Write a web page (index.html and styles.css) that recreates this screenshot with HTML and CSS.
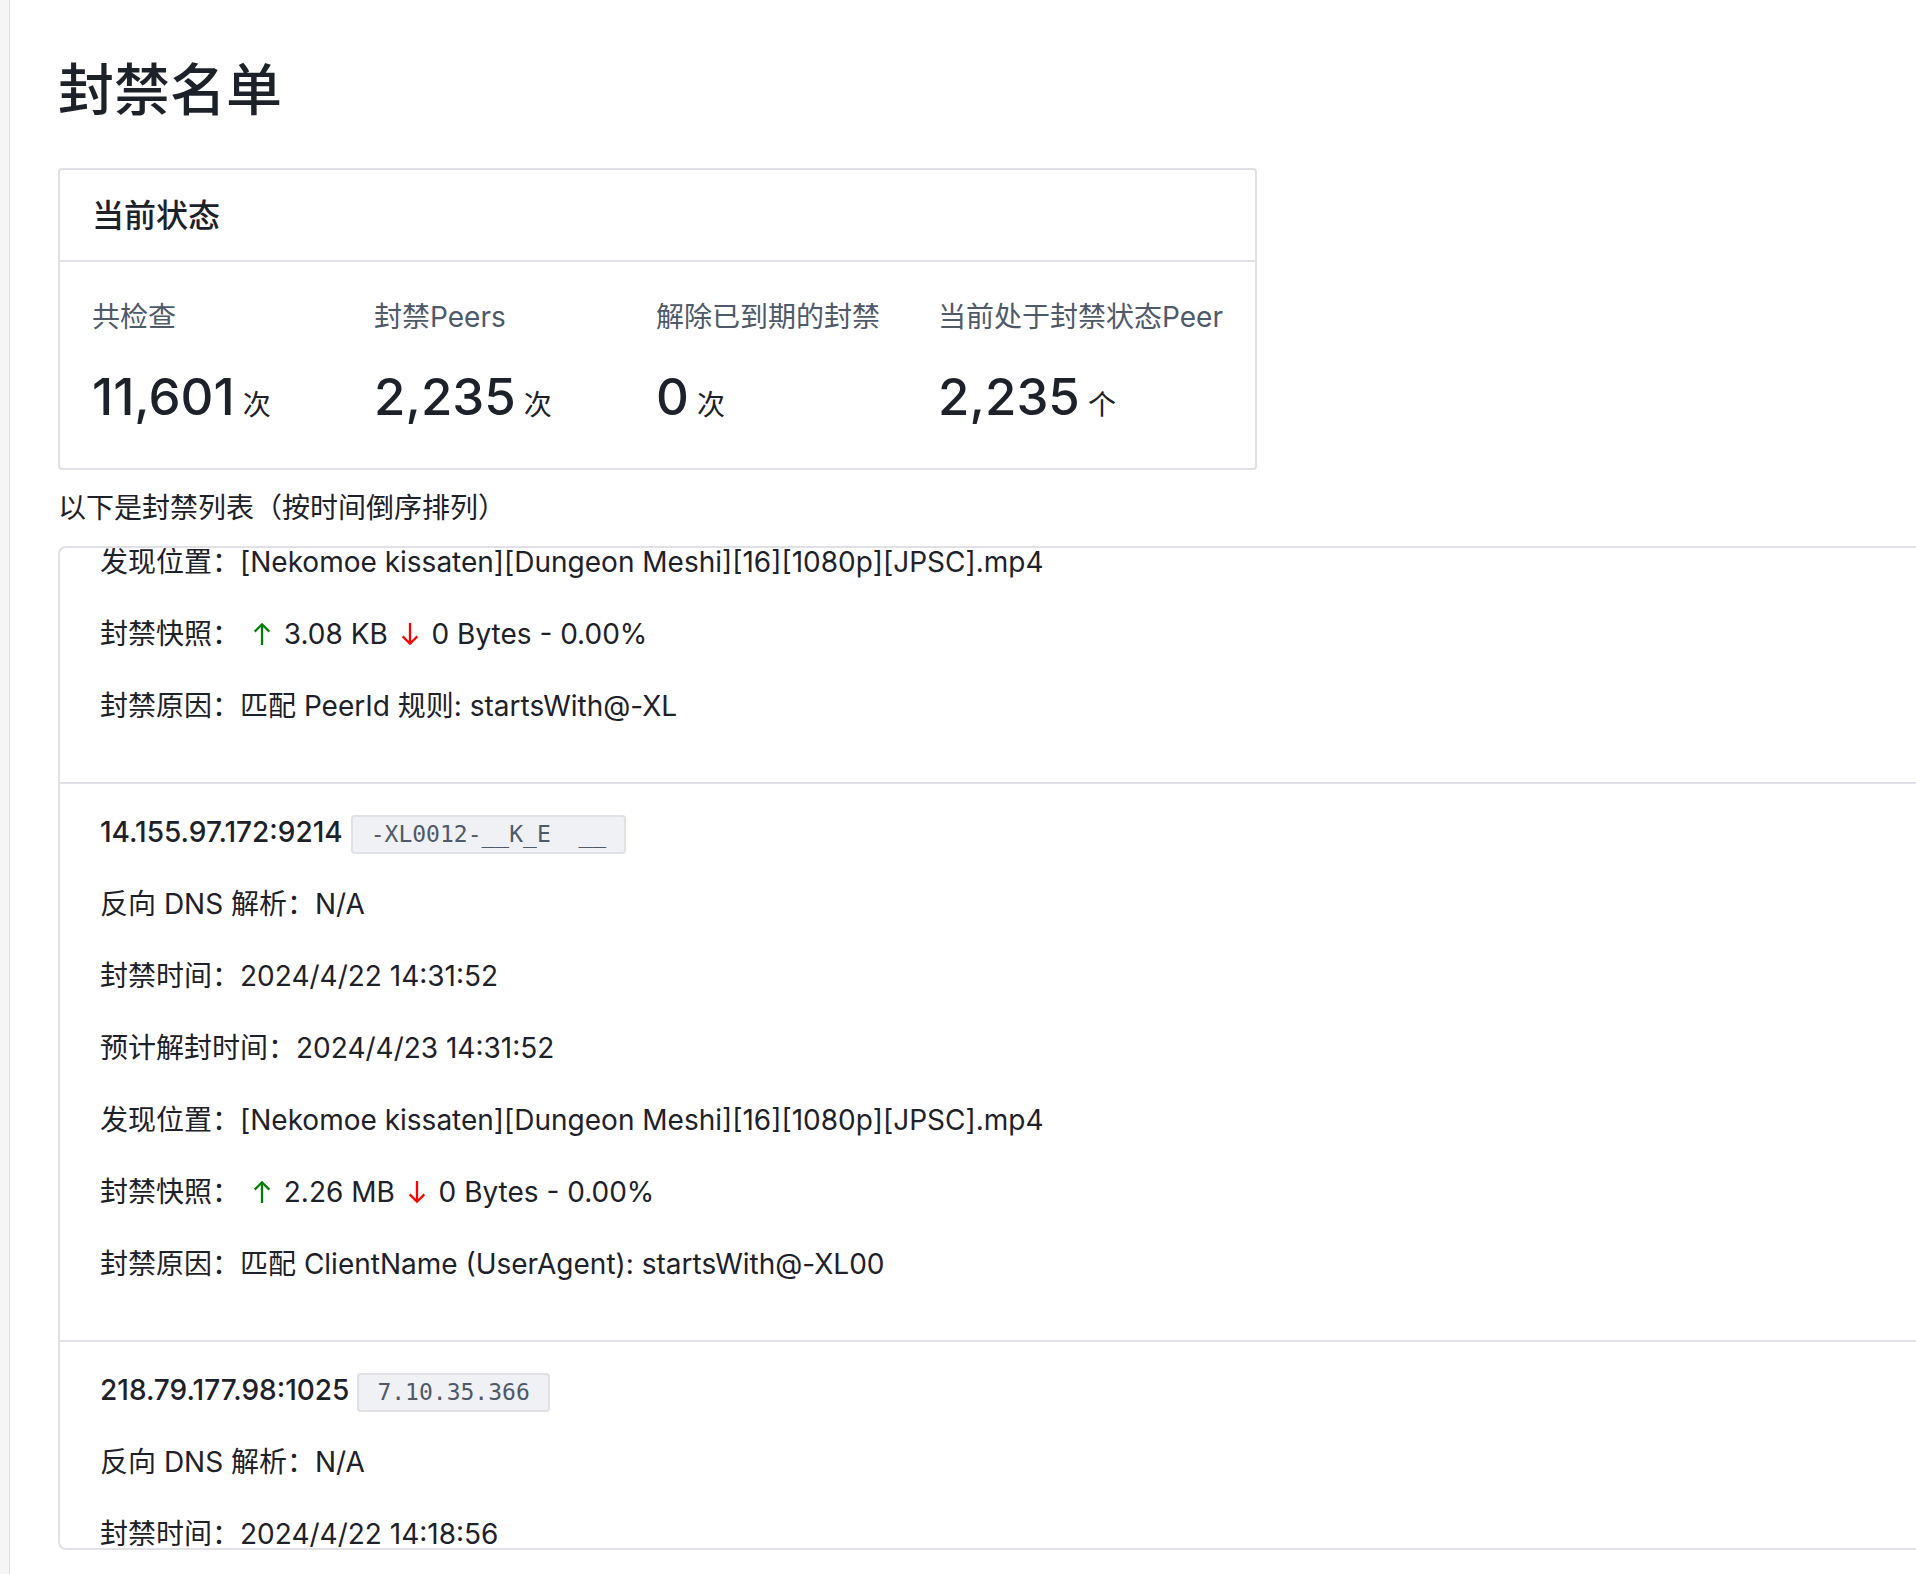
FILE: index.html
```html
<!DOCTYPE html>
<html lang="zh-CN">
<head>
<meta charset="utf-8">
<meta name="viewport" content="width=device-width, initial-scale=1">
<title>封禁名单</title>
<link rel="stylesheet" href="styles.css">
</head>
<body>
<svg class="sprite" aria-hidden="true">
  <symbol id="arrow-up" viewBox="0 0 28 28"><path d="M14 4v21M6.7 11.6 14 4.3l7.3 7.3"/></symbol>
  <symbol id="arrow-down" viewBox="0 0 28 28"><path d="M14 3v21M6.7 16.4l7.3 7.3 7.3-7.3"/></symbol>
</svg>
<div class="layout">
  <aside class="sider"></aside>
  <main class="content">
    <h1 class="title">封禁名单</h1>
    <section class="card">
      <h2 class="card-title">当前状态</h2>
      <dl class="stats">
        <div class="stat"><dt>共检查</dt><dd>11,601<span class="unit">次</span></dd></div>
        <div class="stat"><dt>封禁Peers</dt><dd>2,235<span class="unit">次</span></dd></div>
        <div class="stat"><dt>解除已到期的封禁</dt><dd>0<span class="unit">次</span></dd></div>
        <div class="stat"><dt>当前处于封禁状态Peer</dt><dd>2,235<span class="unit">个</span></dd></div>
      </dl>
    </section>
    <p class="hint">以下是封禁列表（按时间倒序排列）</p>
    <ul class="ban-list">
      <li class="ban ban-scrolled">
        <p>发现位置：[Nekomoe kissaten][Dungeon Meshi][16][1080p][JPSC].mp4</p>
        <p>封禁快照： <svg class="icon up"><use href="#arrow-up"/></svg> 3.08 KB <svg class="icon down"><use href="#arrow-down"/></svg> 0 Bytes - 0.00%</p>
        <p>封禁原因：匹配 PeerId 规则: startsWith@-XL</p>
      </li>
      <li class="ban">
        <h3 class="peer">14.155.97.172:9214<span class="tag">-XL0012-__K_E  __</span></h3>
        <p>反向 DNS 解析：N/A</p>
        <p>封禁时间：2024/4/22 14:31:52</p>
        <p>预计解封时间：2024/4/23 14:31:52</p>
        <p>发现位置：[Nekomoe kissaten][Dungeon Meshi][16][1080p][JPSC].mp4</p>
        <p>封禁快照： <svg class="icon up"><use href="#arrow-up"/></svg> 2.26 MB <svg class="icon down"><use href="#arrow-down"/></svg> 0 Bytes - 0.00%</p>
        <p>封禁原因：匹配 ClientName (UserAgent): startsWith@-XL00</p>
      </li>
      <li class="ban">
        <h3 class="peer">218.79.177.98:1025<span class="tag">7.10.35.366</span></h3>
        <p>反向 DNS 解析：N/A</p>
        <p>封禁时间：2024/4/22 14:18:56</p>
      </li>
    </ul>
  </main>
</div>
</body>
</html>
```

FILE: styles.css
```css
* {
  box-sizing: border-box;
  margin: 0;
  padding: 0;
}

body {
  font-family: Inter, "Noto Sans CJK SC", sans-serif;
  font-size: 28px;
  line-height: 28px;
  color: #1d2129;
  background: #fff;
}

.sprite {
  display: none;
}

.layout {
  display: flex;
  height: 100vh;
  overflow: hidden;
}

.sider {
  flex: none;
  width: 10px;
  background: #f5f5f5;
  border-right: 1px solid #e0e0e6;
}

.content {
  flex: 1;
  min-width: 0;
  display: flex;
  flex-direction: column;
  padding: 56px 0 24px 48px;
}

.title {
  font-size: 56px;
  font-weight: 500;
  line-height: 68px;
  margin-bottom: 44px;
}

.card {
  width: 100%;
  max-width: 1199px;
  border: 2px solid #e0e0e6;
  border-radius: 4px;
}

.card-title {
  padding: 2px 32px 0;
  font-size: 32px;
  font-weight: 500;
  line-height: 88px;
  border-bottom: 2px solid #e0e0e6;
}

.stats {
  display: grid;
  grid-template-columns: repeat(4, 1fr);
  padding: 33px 32px 26px;
}

.stat dt {
  line-height: 44px;
  color: #4e5969;
  white-space: nowrap;
}

.stat dd {
  margin-top: 21px;
  font-size: 51px;
  font-weight: 500;
  line-height: 74px;
}

.unit {
  margin-left: 8px;
  font-size: 28px;
  font-weight: 400;
}

.hint {
  padding: 16px 0;
  line-height: 44px;
}

.ban-list {
  flex: 1;
  min-height: 0;
  overflow: hidden;
  list-style: none;
  border: 2px solid #e0e0e6;
  border-right: 0;
  border-radius: 8px 0 0 8px;
}

.ban {
  display: flex;
  flex-direction: column;
  gap: 44px;
  padding: 34px 40px 62px;
  border-bottom: 2px solid #e0e0e6;
  white-space: nowrap;
}

.ban-scrolled {
  padding-top: 0;
}

.ban p,
.peer {
  height: 28px;
}

.peer {
  font-size: 28px;
  font-weight: 500;
}

.tag {
  margin-left: 8px;
  padding: 4px 18px 5px;
  font-family: "DejaVu Sans Mono", monospace;
  font-size: 23px;
  font-weight: 400;
  color: #4e5969;
  white-space: pre;
  background: #f0f1f4;
  border: 2px solid #e0e0e6;
  border-radius: 4px;
}

.icon {
  width: 28px;
  height: 28px;
  vertical-align: -4px;
  fill: none;
  stroke: currentColor;
  stroke-width: 2.3;
}

.up {
  color: green;
}

.down {
  color: red;
}
```
